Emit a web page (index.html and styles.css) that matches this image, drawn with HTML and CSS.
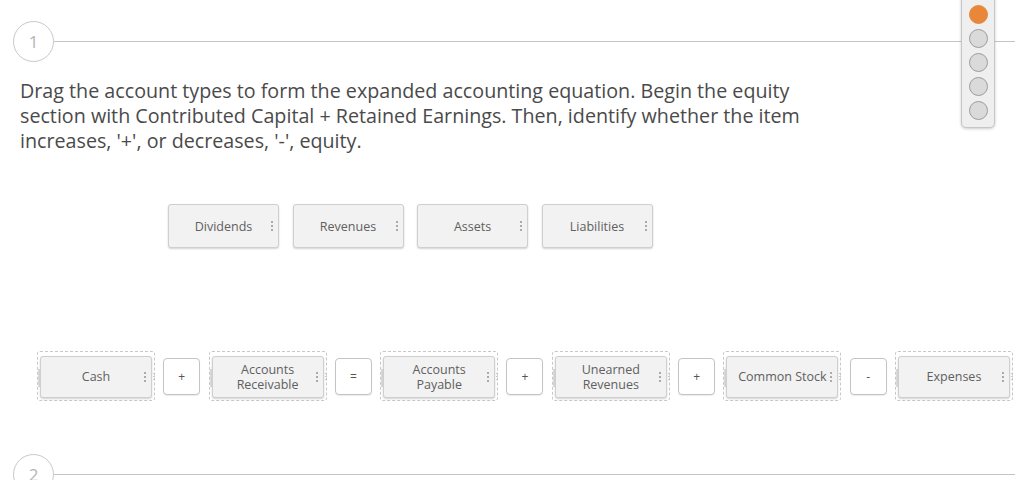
FILE: index.html
```html
<!DOCTYPE html>
<html>
<head>
<meta charset="utf-8">
<link rel="stylesheet" href="styles.css">
</head>
<body>
<div class="page">
  <div class="step-head first">
    <div class="step-num">1</div>
    <div class="step-line"></div>
  </div>
  <p class="prompt">Drag the account types to form the expanded accounting equation. Begin the equity section with Contributed Capital + Retained Earnings. Then, identify whether the item increases, '+', or decreases, '-', equity.</p>

  <div class="bank">
    <div class="tile"><span class="label">Dividends</span><span class="handle"></span></div>
    <div class="tile"><span class="label">Revenues</span><span class="handle"></span></div>
    <div class="tile"><span class="label">Assets</span><span class="handle"></span></div>
    <div class="tile"><span class="label">Liabilities</span><span class="handle"></span></div>
  </div>

  <div class="equation">
    <div class="zone"><div class="tile in"><span class="label">Cash</span><span class="handle"></span></div></div>
    <div class="op">+</div>
    <div class="zone"><div class="tile in"><span class="label">Accounts<br>Receivable</span><span class="handle"></span></div></div>
    <div class="op">=</div>
    <div class="zone"><div class="tile in"><span class="label">Accounts<br>Payable</span><span class="handle"></span></div></div>
    <div class="op">+</div>
    <div class="zone"><div class="tile in"><span class="label">Unearned<br>Revenues</span><span class="handle"></span></div></div>
    <div class="op">+</div>
    <div class="zone"><div class="tile in"><span class="label">Common Stock</span><span class="handle"></span></div></div>
    <div class="op">-</div>
    <div class="zone"><div class="tile in"><span class="label">Expenses</span><span class="handle"></span></div></div>
  </div>

  <div class="step-head second">
    <div class="step-num">2</div>
    <div class="step-line"></div>
  </div>

  <div class="nav">
    <span class="dot active"></span>
    <span class="dot"></span>
    <span class="dot"></span>
    <span class="dot"></span>
    <span class="dot"></span>
  </div>
</div>
</body>
</html>
```
FILE: styles.css
```css
html, body {
  margin: 0;
  padding: 0;
  background: #ffffff;
  overflow: hidden;
}
.page {
  position: relative;
  width: 1024px;
  height: 480px;
  font-family: "Open Sans", "DejaVu Sans", sans-serif;
  color: #444;
}
.step-head {
  display: flex;
  align-items: center;
  margin-left: 13px;
  margin-right: 9px;
}
.step-head.first {
  padding-top: 21px;
}
.step-head.second {
  margin-top: 53px;
}
.step-num {
  width: 39px;
  height: 39px;
  border: 1.5px solid #c8c8c8;
  border-radius: 50%;
  display: flex;
  align-items: center;
  justify-content: center;
  font-size: 17px;
  color: #b5b5b5;
  flex: none;
}
.step-line {
  flex: 1;
  height: 1.5px;
  background: #c4c4c4;
}
.prompt {
  margin: 16px 0 0 20px;
  width: 810px;
  font-size: 19.7px;
  line-height: 25px;
  color: #4a4a4a;
}
.bank {
  display: flex;
  gap: 13.5px;
  margin: 51px 0 0 168px;
}
.tile {
  position: relative;
  width: 111px;
  height: 44px;
  box-sizing: border-box;
  background: #f2f2f2;
  border: 1px solid #cfcfcf;
  border-radius: 3px;
  box-shadow: 0 1px 2px rgba(0,0,0,0.18);
  display: flex;
  align-items: center;
  justify-content: center;
}
.label {
  font-size: 12.5px;
  line-height: 15px;
  color: #606060;
  text-align: center;
  white-space: nowrap;
}
.handle {
  position: absolute;
  right: 5px;
  top: 50%;
  width: 2px;
  height: 12px;
  margin-top: -6px;
  background: radial-gradient(circle, #aaaaaa 0.9px, transparent 1.2px) 0 0 / 2px 4px repeat-y;
}
.equation {
  display: flex;
  align-items: center;
  gap: 8.3px;
  margin: 103px 0 0 37px;
}
.zone {
  position: relative;
  width: 118px;
  height: 50px;
  box-sizing: border-box;
  border: 1px dashed #c8c8c8;
  border-radius: 3px;
  display: flex;
  align-items: center;
  padding-left: 2px;
}
.zone::before {
  content: "";
  position: absolute;
  left: 0;
  top: 17px;
  width: 3px;
  height: 18px;
  background: #dcdcdc;
}
.zone::after {
  content: "";
  position: absolute;
  right: -1px;
  top: 20px;
  width: 2px;
  height: 8px;
  background: radial-gradient(circle, #c8c8c8 0.7px, transparent 1px) 0 0 / 2px 3px repeat-y;
}
.tile.in {
  width: 112px;
  height: 42px;
  margin-top: 1px;
}
.op {
  width: 37px;
  height: 37px;
  box-sizing: border-box;
  border: 1px solid #c4c4c4;
  border-radius: 4px;
  background: #fff;
  box-shadow: 0 1px 1px rgba(0,0,0,0.08);
  display: flex;
  align-items: center;
  justify-content: center;
  font-size: 12px;
  color: #555;
  flex: none;
}
.nav {
  position: absolute;
  left: 961px;
  top: -4px;
  width: 34px;
  box-sizing: border-box;
  padding: 7.5px 0 7px;
  background: #efefef;
  border: 1px solid #c6c6c6;
  border-radius: 0 0 5px 5px;
  box-shadow: 0 1px 3px rgba(0,0,0,0.2);
  display: flex;
  flex-direction: column;
  align-items: center;
  gap: 5px;
}
.dot {
  width: 19px;
  height: 19px;
  box-sizing: border-box;
  border-radius: 50%;
  background: #dadada;
  border: 1px solid #9c9c9c;
  flex: none;
}
.dot.active {
  background: #e8873a;
  border-color: #e8873a;
}
```
